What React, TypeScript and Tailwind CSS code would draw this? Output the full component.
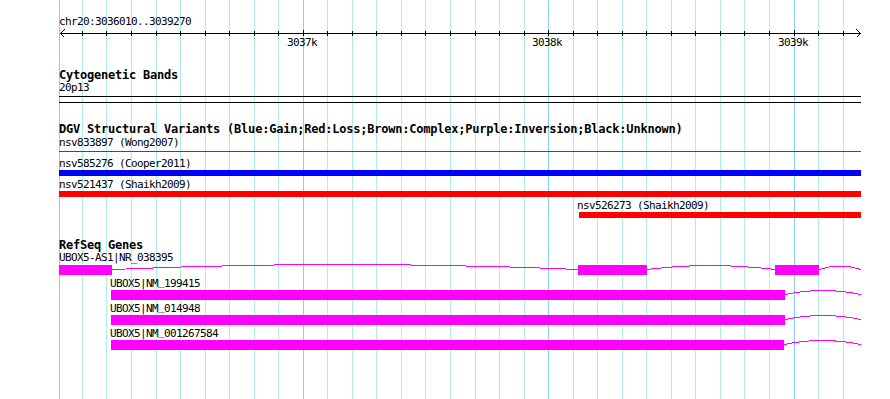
import React from 'react'

const START = 3036010
const SCALE = 0.2454
const toX = (pos: number) => Math.floor(60.3 + (pos - START) * SCALE)

type Tick = { pos: number; x: number; major: boolean }

const ticks: Tick[] = []
for (let p = 3036100; p <= 3039200; p += 100) {
  ticks.push({ pos: p, x: toX(p), major: p % 1000 === 0 })
}

// the track font puts "_" on the baseline row; lift DejaVu's low underscore clear of the bar below
const withUnderscores = (s: string) =>
  s.split('_').flatMap((part, i) =>
    i === 0
      ? [part]
      : [
          <span key={i} className="inline-block align-top leading-[8px]">
            _
          </span>,
          part
        ]
  )

const Text = ({
  children,
  className = '',
  lift = false
}: {
  children: string
  className?: string
  lift?: boolean
}) => (
  <div className={`h-[12px] whitespace-nowrap text-[11px] leading-[12px] tracking-[-0.62px] ${className}`}>
    {lift ? withUnderscores(children) : children}
  </div>
)

const Title = ({ children, className = '' }: { children: React.ReactNode; className?: string }) => (
  <div className={`whitespace-nowrap text-[12px] font-bold leading-[13px] tracking-[-0.22px] ${className}`}>
    {children}
  </div>
)

// intron drawn as a shallow hat between two exons, in row-local coords
const Intron = ({ x1, x2, lift }: { x1: number; x2: number; lift: number }) => (
  <path d={`M${x1} 4.5 Q${(x1 + x2) / 2} ${4.5 - 2 * lift} ${x2} 4.5`} />
)

const IntronLayer = ({ children }: { children: React.ReactNode }) => (
  <svg
    className="absolute left-0 top-0 overflow-visible"
    width={802}
    height={10}
    fill="none"
    stroke="#ff00ff"
    strokeWidth={1}
    shapeRendering="crispEdges"
  >
    {children}
  </svg>
)

const Transcript = ({ last = false }: { last?: boolean }) => (
  <div className="relative h-[10px] w-[802px]">
    <div className={`absolute left-[52px] top-0 h-full bg-[#ff00ff] ${last ? 'w-[673px]' : 'w-[674px]'}`} />
    <IntronLayer>
      <Intron x1={last ? 725 : 726} x2={802} lift={4} />
    </IntronLayer>
  </div>
)

export default function App() {
  return (
    <div className="relative h-[399px] w-[890px] overflow-hidden bg-white font-['DejaVu_Sans_Mono',monospace] text-black">
      {/* grid */}
      <svg className="absolute inset-0" width={890} height={399} shapeRendering="crispEdges">
        <rect x={59} y={0} width={1} height={399} fill="#87cefa" />
        {ticks.map((t) => (
          <rect key={t.pos} x={t.x} y={0} width={1} height={399} fill={t.major ? '#87cefa' : '#afeeee'} />
        ))}
      </svg>

      <div className="relative flex flex-col">
        {/* ruler */}
        <div className="pl-[59px] pt-[16px]">
          <Text className="h-[10px]">chr20:3036010..3039270</Text>
        </div>
        <svg className="block" width={890} height={9} shapeRendering="crispEdges">
          <rect x={60} y={5} width={801} height={1} fill="#000" />
          {ticks.map((t) => (
            <rect key={t.pos} x={t.x} y={t.major ? 2 : 3} width={1} height={t.major ? 6 : 5} fill="#000" />
          ))}
          <path d="M64.5 1.5 L60.5 5.5 L64.5 9.5" fill="none" stroke="#000" strokeWidth={1} />
          <path d="M856.5 1.5 L860.5 5.5 L856.5 9.5" fill="none" stroke="#000" strokeWidth={1} />
        </svg>
        <div className="relative h-[13px]">
          {ticks
            .filter((t) => t.major)
            .map((t) => (
              <div
                key={t.pos}
                className="absolute top-0 w-[32px] whitespace-nowrap text-[11px] leading-[12px] tracking-[-0.62px]"
                style={{ left: t.x - 16 }}
              >
                {t.pos / 1000}k
              </div>
            ))}
        </div>

        <div className="flex flex-col pl-[59px]">
          {/* cytogenetic bands */}
          <Title className="mt-[19px] h-[13px]">Cytogenetic Bands</Title>
          <Text>20p13</Text>
          <div className="mt-[2px] h-[7px] w-[802px] border-y border-black" />

          {/* DGV */}
          <Title className="mt-[20px] h-[14px]">
            DGV Structural Variants (Blue:Gain;Red:Loss;Brown:Complex;Purple:Inversion;Black:Unknown)
          </Title>
          <Text>nsv833897 (Wong2007)</Text>
          <div className="mt-[2px] h-[1px] w-[802px] bg-[#ff0000]" />
          <Text className="mt-[6px]">nsv585276 (Cooper2011)</Text>
          <div className="h-[6px] w-[802px] bg-[#0000ff]" />
          <Text className="mt-[3px]">nsv521437 (Shaikh2009)</Text>
          <div className="h-[6px] w-[802px] bg-[#ff0000]" />
          <Text className="mt-[3px] pl-[518px]">nsv526273 (Shaikh2009)</Text>
          <div className="ml-[520px] h-[6px] w-[282px] bg-[#ff0000]" />

          {/* RefSeq */}
          <Title className="mt-[21px] h-[13px]">RefSeq Genes</Title>
          <Text>UBOX5-AS1|NR_038395</Text>
          <div className="relative mt-[1px] h-[10px] w-[802px]">
            <div className="absolute left-0 top-0 h-full w-[53px] bg-[#ff00ff]" />
            <div className="absolute left-[519px] top-0 h-full w-[69px] bg-[#ff00ff]" />
            <div className="absolute left-[716px] top-0 h-full w-[44px] bg-[#ff00ff]" />
            <IntronLayer>
              <Intron x1={53} x2={519} lift={5} />
              <Intron x1={588} x2={716} lift={4} />
              <Intron x1={760} x2={802} lift={3.5} />
            </IntronLayer>
          </div>

          <Text lift className="mt-[3px] pl-[51px]">UBOX5|NM_199415</Text>
          <Transcript />
          <Text lift className="mt-[3px] pl-[51px]">UBOX5|NM_014948</Text>
          <Transcript />
          <Text lift className="mt-[3px] pl-[51px]">UBOX5|NM_001267584</Text>
          <Transcript last />
        </div>
      </div>
    </div>
  )
}
